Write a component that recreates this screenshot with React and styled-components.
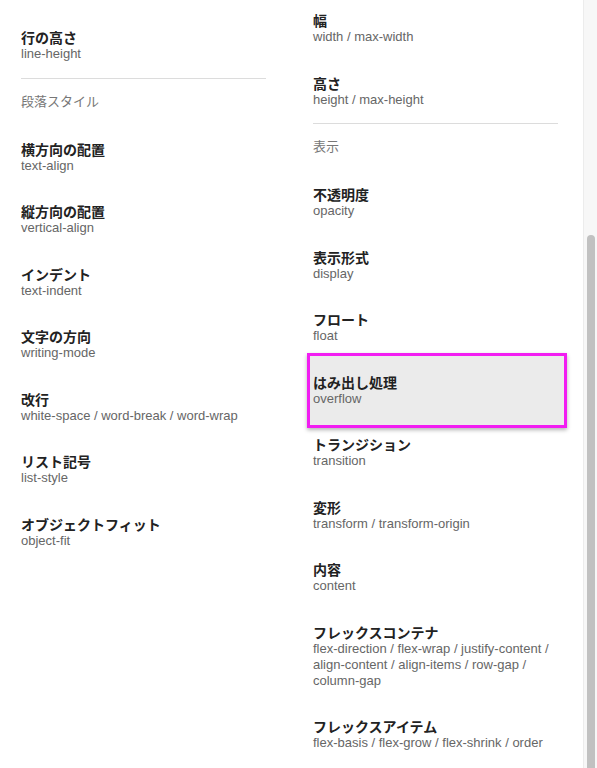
import React from 'react';
import styled, { createGlobalStyle } from 'styled-components';

const Global = createGlobalStyle`
  html, body { margin: 0; padding: 0; background: #fff; }
  body { font-family: "Liberation Sans", "Noto Sans CJK JP", sans-serif; }
`;

const Page = styled.div`
  display: flex;
  width: 597px;
  height: 768px;
  overflow: hidden;
`;

const Content = styled.div`
  flex: 1;
  display: flex;
  gap: 47px;
  padding-left: 21px;
`;

const Column = styled.div`
  width: 245px;
  display: flex;
  flex-direction: column;
  margin-top: ${({ offset }) => offset}px;
`;

const Item = styled.div`
  position: relative;
  padding: 15px 0 15.5px;
  ${({ active }) =>
    active &&
    `
    &::before {
      content: '';
      position: absolute;
      top: -7px;
      bottom: -5.5px;
      left: -6px;
      right: -9px;
      border: 3px solid #f21df2;
      background: #ebebeb;
      box-shadow: 0 2px 4px rgba(0, 0, 0, 0.3);
    }
  `}
`;

const Title = styled.div`
  position: relative;
  font-size: 14px;
  line-height: 16px;
  font-weight: bold;
  color: #222;
`;

const Sub = styled.div`
  position: relative;
  font-size: 13px;
  line-height: 16px;
  color: #666;
`;

const Divider = styled.hr`
  margin: 0;
  border: 0;
  border-top: 1px solid #dcdcdc;
`;

const Header = styled.div`
  padding: 15px 0 17px;
  font-size: 13px;
  line-height: 16px;
  color: #777;
`;

const Track = styled.div`
  width: 13px;
  border-left: 1px solid #ececec;
  background: #f7f7f7;
  display: flex;
  justify-content: center;
`;

const Thumb = styled.div`
  width: 8px;
  margin-top: 235px;
  height: 540px;
  border-radius: 4px;
  background: #c1c1c1;
`;

const left = [
  ['行の高さ', 'line-height'],
  'divider',
  { header: '段落スタイル' },
  ['横方向の配置', 'text-align'],
  ['縦方向の配置', 'vertical-align'],
  ['インデント', 'text-indent'],
  ['文字の方向', 'writing-mode'],
  ['改行', 'white-space / word-break / word-wrap'],
  ['リスト記号', 'list-style'],
  ['オブジェクトフィット', 'object-fit'],
];

const right = [
  ['幅', 'width / max-width'],
  ['高さ', 'height / max-height'],
  'divider',
  { header: '表示' },
  ['不透明度', 'opacity'],
  ['表示形式', 'display'],
  ['フロート', 'float'],
  ['はみ出し処理', 'overflow', true],
  ['トランジション', 'transition'],
  ['変形', 'transform / transform-origin'],
  ['内容', 'content'],
  ['フレックスコンテナ', 'flex-direction / flex-wrap / justify-content / align-content / align-items / row-gap / column-gap'],
  ['フレックスアイテム', 'flex-basis / flex-grow / flex-shrink / order'],
];

function renderEntries(list) {
  return list.map((entry, i) => {
    if (entry === 'divider') return <Divider key={i} />;
    if (entry.header) return <Header key={i}>{entry.header}</Header>;
    const [title, sub, active] = entry;
    return (
      <Item key={i} active={active}>
        <Title>{title}</Title>
        <Sub>{sub}</Sub>
      </Item>
    );
  });
}

export default function App() {
  return (
    <Page>
      <Global />
      <Content>
        <Column offset={15}>{renderEntries(left)}</Column>
        <Column offset={-2}>{renderEntries(right)}</Column>
      </Content>
      <Track>
        <Thumb />
      </Track>
    </Page>
  );
}
